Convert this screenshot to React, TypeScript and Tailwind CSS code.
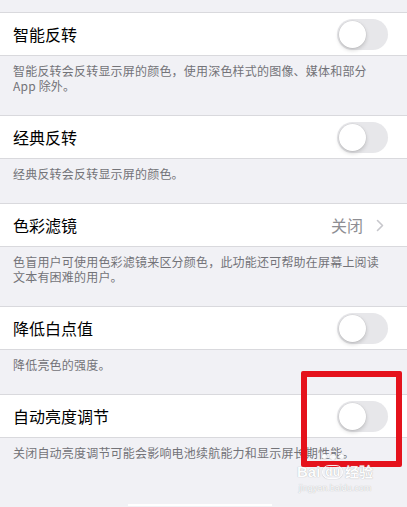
import React from 'react'

type Item = {
  title: string
  desc: string[]
  value?: string
}

const ITEMS: Item[] = [
  { title: '智能反转', desc: ['智能反转会反转显示屏的颜色，使用深色样式的图像、媒体和部分', 'App 除外。'] },
  { title: '经典反转', desc: ['经典反转会反转显示屏的颜色。'] },
  { title: '色彩滤镜', value: '关闭', desc: ['色盲用户可使用色彩滤镜来区分颜色，此功能还可帮助在屏幕上阅读', '文本有困难的用户。'] },
  { title: '降低白点值', desc: ['降低亮色的强度。'] },
  { title: '自动亮度调节', desc: ['关闭自动亮度调节可能会影响电池续航能力和显示屏长期性能。'] },
]

const Toggle = () => (
  <div className="relative w-[51px] h-[31px] rounded-full bg-[#e7e7ea]">
    <div className="absolute left-[2px] top-[2px] w-[27px] h-[27px] rounded-full bg-white shadow-[0_2px_4px_rgba(0,0,0,0.18),0_0_0_0.5px_rgba(0,0,0,0.06)]" />
  </div>
)

const App: React.FC = () => {
  return (
    <div
      className="relative w-[407px] h-[507px] overflow-hidden bg-[#f1f1f5]"
      style={{ fontFamily: '"Noto Sans CJK SC", "Noto Sans", sans-serif' }}
    >
      <div className="h-[12px]" />
      {ITEMS.map((it) => (
        <div key={it.title}>
          <div className="h-[44px] bg-white border-y border-[#d9d9dd] flex items-center pl-[13px] pr-[19px]">
            <div className="flex-1 text-[16px] text-black leading-none">{it.title}</div>
            {it.value ? (
              <div className="flex items-center gap-[13px] text-[16px] text-[#8e8e93] leading-none pr-[4px]">
                <span>{it.value}</span>
                <svg width="8" height="13" viewBox="0 0 8 13">
                  <path d="M1.5 1.5 L6.5 6.5 L1.5 11.5" fill="none" stroke="#c7c7cc" strokeWidth="1.6" strokeLinecap="round" strokeLinejoin="round" />
                </svg>
              </div>
            ) : (
              <Toggle />
            )}
          </div>
          <div className="pl-[13px] pt-[7px] pb-[22px] text-[12px] leading-[15px] tracking-[0.2px] text-[#737378] whitespace-nowrap">
            {it.desc.map((l, i) => (
              <div key={i}>{l}</div>
            ))}
          </div>
        </div>
      ))}

      {/* bottom bar hint */}
      <div className="absolute left-[128px] top-[504px] w-[144px] h-[2px] bg-white" />

      {/* red highlight box */}
      <div className="absolute left-[301px] top-[371px] w-[101px] h-[96px] border-[6px] border-[#e5121c] rounded-[2px]" />

      {/* watermark */}
      <div className="absolute left-[290px] top-[454px] w-[90px] flex flex-col items-center text-white opacity-90 [text-shadow:0_0_1px_#9a9a9a]">
        <div className="flex gap-[3px] ml-[-4px]">
          <span className="w-[5px] h-[5px] rounded-full bg-white shadow-[0_0_1px_#999]" />
          <span className="w-[6px] h-[6px] rounded-full bg-white shadow-[0_0_1px_#999]" />
          <span className="w-[5px] h-[5px] rounded-full bg-white shadow-[0_0_1px_#999]" />
        </div>
        <div className="flex items-center gap-[2px] mt-[4px] text-[15px] font-bold leading-none" style={{ fontFamily: '"Liberation Sans", "Noto Sans CJK SC", sans-serif' }}>
          <span>Bai</span>
          <span className="px-[2px] rounded-full border border-white shadow-[0_0_1px_#999] text-[12px]">du</span>
          <span className="text-[14px]">经验</span>
        </div>
        <div className="text-[9px] leading-none mt-[5px]" style={{ fontFamily: '"Liberation Sans", sans-serif' }}>
          jingyan.baidu.com
        </div>
      </div>
    </div>
  )
}

export default App
